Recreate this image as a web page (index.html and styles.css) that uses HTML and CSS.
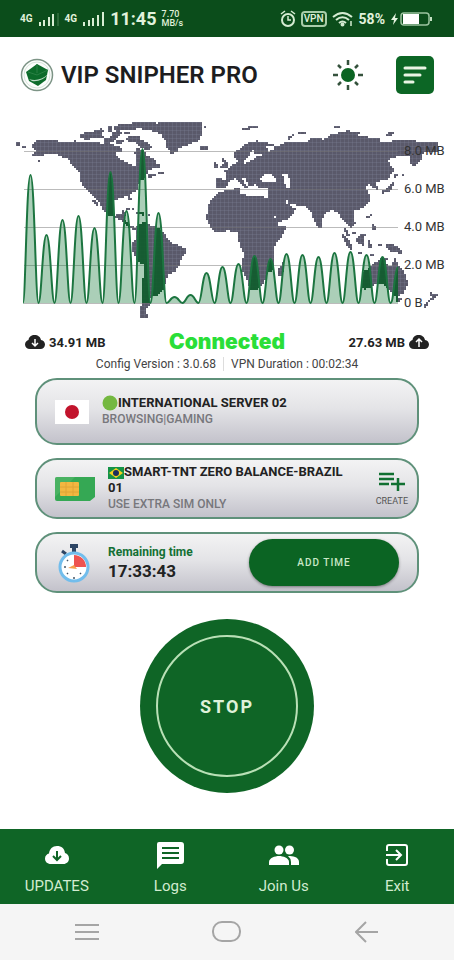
FILE: index.html
```html
<!DOCTYPE html>
<html lang="en">
<head>
  <meta charset="UTF-8" />
  <meta name="viewport" content="width=device-width, initial-scale=1" />
  <title>VIP SNIPHER PRO</title>
  <link rel="stylesheet" href="styles.css">
</head>
<body>
  <div class="statusbar">
    <div class="status-group">
      <span class="net">4G</span>
      <svg class="signal" width="22" height="16" viewBox="0 0 22 16">
        <path d="M2 15v-4M6 15V9M11 15V6M15 15V3" />
        <path class="dim" d="M20 15V2" />
      </svg>
      <span class="net">4G</span>
      <svg class="signal" width="23" height="16" viewBox="0 0 23 16">
        <path d="M2 15v-4M7 15V9M11 15V7M16 15V4M21 15V1" />
      </svg>
      <span class="clock">11:45</span>
      <span class="speed">7.70<br>MB/s</span>
    </div>
    <div class="status-group">
      <svg width="16" height="18" viewBox="0 0 16 18" fill="none" stroke="#d5ecd2" stroke-width="2">
        <circle cx="8" cy="10" r="6" />
        <path d="M8 6v4h3M1 4l4-3M15 4l-4-3" stroke-width="1.5" />
      </svg>
      <span class="vpn">VPN</span>
      <svg width="22" height="18" viewBox="0 0 22 18" fill="none" stroke="#d5ecd2" stroke-width="2">
        <path d="M1 7q9.500-8 19 0M4 10q6.500-5.500 13 0M7 13q3.500-3 7 0" />
        <circle cx="10.500" cy="14.500" r="1" />
        <path d="M19 11v5" stroke-width="1.500" />
      </svg>
      <span class="percent">58%</span>
      <svg width="44" height="16" viewBox="0 0 44 16">
        <path d="M6 2 1 9h3l-1 5 5-7H5z" fill="#e4f3df" />
        <rect x="11" y="2" width="28" height="12" rx="3" fill="none" stroke="#9cc4a0" stroke-width="1.500" />
        <rect x="13" y="3" width="16" height="10" fill="#fff" />
        <path d="M41 6v4" stroke="#c3e0c2" stroke-width="2" />
      </svg>
    </div>
  </div>

  <header class="header">
    <svg class="logo" width="34" height="34" viewBox="0 0 34 34">
      <circle cx="17" cy="17" r="15.500" fill="#fbfdfb" stroke="#7d9486" stroke-width="1.500" />
      <circle cx="17" cy="17" r="13" fill="none" stroke="#d8e4db" />
      <path d="M17 6 28 12l-2 10-8 6-9-5-3-9z" fill="#0c6b2a" />
      <path d="M17 6v9M8 14l9 3 11-5" stroke="#2a8044" fill="none" />
      <path d="M9 21c6 2 13 1 19-5-3 5-10 8-16 7z" fill="#b9d8c2" />
    </svg>
    <h1>VIP SNIPHER PRO</h1>
    <button class="icon-btn" type="button" aria-label="Theme">
      <svg width="30" height="30" viewBox="0 0 30 30">
        <circle cx="15" cy="15" r="7" fill="#0b6423" />
        <path d="M15 0v5M15 25v5M0 15h5M25 15h5M5 5l3 3M22 22l3 3M5 25l3-3M22 8l3-3" stroke="#35523d" stroke-width="2.500" />
      </svg>
    </button>
    <button class="menu-btn" type="button" aria-label="Menu">
      <svg width="38" height="38" viewBox="0 0 38 38" stroke="#e9f5e4" stroke-width="3" stroke-linecap="round">
        <path d="M9 12h20M9 19h15M9 26h8" />
      </svg>
    </button>
  </header>

  <main>
    <svg class="chart" viewBox="0 3 454 217" role="img" aria-label="Traffic">
      <defs>
        <pattern id="mesh" width="4" height="4" patternUnits="userSpaceOnUse">
          <path d="M0 .5h4M.5 0v4" stroke="#8586a0" stroke-opacity=".25" />
        </pattern>
        <clipPath id="landClip"><path id="clipCells" /></clipPath>
      </defs>
      <path id="land" class="land" />
      <path id="landMesh" fill="url(#mesh)" />
      <path class="grid" d="M24 41.500H398M24 79.500H398M24 117.500H398M24 155.500H398M24 193.500H398" />
      <path id="area" class="area" />
      <path id="areaLand" class="area-land" clip-path="url(#landClip)" />
      <path id="line" class="line" />
      <g class="axis">
        <text x="404" y="45">8.0 MB</text>
        <text x="404" y="83">6.0 MB</text>
        <text x="404" y="121">4.0 MB</text>
        <text x="404" y="159">2.0 MB</text>
        <text x="404" y="197">0 B</text>
      </g>
    </svg>

    <div class="stats">
      <div class="traffic">
        <svg width="20" height="16" viewBox="0 0 20 16">
          <path d="M5 15C2 15 0 13 0 10.500 0 8 2 6.500 3.500 6 4 2.500 6.500 1 9.500 1c3.500 0 6 2 6.500 5 2.500.5 4 2.200 4 4.500 0 2.700-2 4.500-4.500 4.500z" fill="#222" />
          <path d="M10 5v7M7 9l3 3 3-3" fill="none" stroke="#fff" stroke-width="1.500" />
        </svg>
        <span>34.91 MB</span>
      </div>
      <div class="state">Connected</div>
      <div class="traffic upload">
        <span>27.63 MB</span>
        <svg width="20" height="16" viewBox="0 0 20 16">
          <path d="M5 15C2 15 0 13 0 10.500 0 8 2 6.500 3.500 6 4 2.500 6.500 1 9.500 1c3.500 0 6 2 6.500 5 2.500.5 4 2.200 4 4.500 0 2.700-2 4.500-4.500 4.500z" fill="#222" />
          <path d="M10 13V6M7 8l3-3 3 3" fill="none" stroke="#fff" stroke-width="1.500" />
        </svg>
      </div>
    </div>
    <div class="meta">
      <span>Config Version : 3.0.68</span>
      <span class="duration">VPN Duration : 00:02:34</span>
    </div>

    <div class="cards">
      <section class="card card-server">
        <svg class="flag" width="34" height="24" viewBox="0 0 34 24">
          <rect width="34" height="24" fill="#fff" />
          <circle cx="17" cy="12" r="7" fill="#c2142c" />
        </svg>
        <div class="card-text">
          <div class="card-title"><svg width="16" height="16" viewBox="0 0 16 16"><circle cx="8" cy="8" r="7.500" fill="#74b840" /></svg>INTERNATIONAL SERVER 02</div>
          <div class="card-sub">BROWSING|GAMING</div>
        </div>
      </section>

      <section class="card card-sim">
        <svg width="40" height="26" viewBox="0 0 40 26">
          <path d="M2 1h38v20l-5 4H2q-2 0-2-2V3q0-2 2-2z" fill="#35a854" />
          <path d="M0 21 20 1H2Q0 1 0 3z" fill="#5dbc70" opacity=".5" />
          <rect x="5" y="6" width="19" height="14" rx="1" fill="#f3b741" />
          <path d="M5 11h6v5H5M24 11h-6v5h6M11 6v5h7V6M11 20v-4h7v4" fill="none" stroke="#e0a436" />
        </svg>
        <div class="card-text">
          <div class="card-title"><svg width="16" height="12" viewBox="0 0 16 12"><rect width="16" height="12" fill="#159447" /><path d="M8 1l7 5-7 5-7-5z" fill="#f2d21f" /><circle cx="8" cy="6" r="3" fill="#1b2f5c" /></svg>SMART-TNT ZERO BALANCE-BRAZIL 01</div>
          <div class="card-sub">USE EXTRA SIM ONLY</div>
        </div>
        <button class="create" type="button">
          <svg width="26" height="20" viewBox="0 0 26 20" fill="none" stroke="#117032" stroke-width="2.500">
            <path d="M0 3h15M0 8h15M0 13h10M12 13h14M19 7v13" />
          </svg>
          CREATE
        </button>
      </section>

      <section class="card card-time">
        <svg width="38" height="40" viewBox="-2 0 38 40">
          <path d="M13 3h8M17 3v6" stroke="#2d4564" stroke-width="4" />
          <path d="M5 8l4 3" stroke="#2d4564" stroke-width="3" />
          <circle cx="17" cy="24" r="14" fill="#fff" stroke="#72bdec" stroke-width="3" />
          <path d="M17 24V12a12 12 0 0 1 12 12z" fill="#ee5350" />
          <path d="M17 34v2M7 24h2M10 17l1 1M10 31l1-1M24 31l-1-1" stroke="#456" stroke-width="1.500" />
          <path d="M11 25l6-3 3 4z" fill="#f5a04c" />
        </svg>
        <div class="card-text">
          <div class="time-label">Remaining time</div>
          <div class="time-value">17:33:43</div>
        </div>
        <button class="add-time" type="button">ADD TIME</button>
      </section>
    </div>

    <button class="stop" type="button"><span>STOP</span></button>
  </main>

  <nav class="tabs">
    <a href="#updates">
      <svg width="26" height="28" viewBox="0 0 26 28">
        <path d="M7 23c-4 0-6-2.500-6-5.500 0-2.800 2-4.500 4-5C5.500 8 8.500 5 13 5c4.500 0 7.500 2.500 8 7 2.500.8 4 2.800 4 5.500 0 3.200-2.500 5.500-5.500 5.500z" fill="#fff" />
        <path d="M13 10v9M9 15l4 4 4-4" fill="none" stroke="#0f6526" stroke-width="2" />
      </svg>
      UPDATES
    </a>
    <a href="#logs">
      <svg width="28" height="28" viewBox="0 0 28 28">
        <path d="M3 1h22q3 0 3 3v16q0 3-3 3H6l-5 5V3q0-2 2-2z" fill="#fff" />
        <path d="M6 7h17M6 12h17M6 17h17" stroke="#0f6526" stroke-width="2" />
      </svg>
      Logs
    </a>
    <a href="#join">
      <svg width="30" height="28" viewBox="0 0 30 28" fill="#fff">
        <circle cx="10" cy="9" r="4.500" />
        <path d="M0 24v-3c0-4 6-6 10-6s10 2 10 6v3z" />
        <circle cx="20.500" cy="9" r="4.500" />
        <path d="M21 15c5 .2 9 2 9 6v3h-8v-3q0-3.500-3-6z" />
      </svg>
      Join Us
    </a>
    <a href="#exit">
      <svg width="24" height="28" viewBox="0 0 24 28" fill="none" stroke="#fff" stroke-width="2">
        <path d="M2 10V6q0-2 2-2h16q2 0 2 2v16q0 2-2 2H4q-2 0-2-2v-4M1 14h14M11 9l5 5-5 5" />
      </svg>
      Exit
    </a>
  </nav>

  <div class="sysnav">
    <button type="button" aria-label="Recent apps">
      <svg width="26" height="20" viewBox="0 0 26 20"><path d="M1 3h24M1 10h24M1 17h24" /></svg>
    </button>
    <button type="button" aria-label="Home">
      <svg width="30" height="22" viewBox="0 0 30 22"><rect x="1" y="1" width="27" height="19" rx="9" /></svg>
    </button>
    <button type="button" aria-label="Back">
      <svg width="24" height="22" viewBox="0 0 24 22"><path d="M23 11H2M11 1 1 11l10 10" /></svg>
    </button>
  </div>

  <script src="chart.js"></script>
</body>
</html>
```

FILE: chart.js
```js
// outlines are stored at 3x the chart units, as x,y pairs
const SCALE = 3;
const CELL = 2;

const west = [
  // north america
  '108,90 175,88 178,96 218,96 222,88 232,98 330,100 345,108 362,106 364,124 348,128 352,144 380,156 402,168 404,178 408,150 404,128 412,114 430,122 445,140 462,145 470,160 487,170 462,174 445,180 440,195 432,205 420,215 412,235 408,245 392,250 394,272 388,272 382,258 362,266 345,268 342,290 340,320 325,318 310,300 295,275 275,255 250,232 240,210 243,190 225,175 212,158 205,146 185,140 165,132 140,132 120,140 95,136 108,122 93,112',
  '325,306 345,316 378,306 380,318 366,324 385,336 392,350 412,352 404,364 385,350 368,334 345,324',
  // south america
  '406,350 430,335 455,348 475,352 490,368 505,386 520,400 556,414 556,428 545,440 540,465 525,485 505,495 498,515 490,540 475,557 460,558 450,568 450,585 438,600 446,626 422,624 418,606 425,580 428,540 430,465 412,450 398,425 395,400 408,385',
  '275,268 284,268 300,290 292,292',
  // greenland and arctic islands
  '455,52 478,38 606,38 608,60 600,92 575,98 560,108 540,112 528,128 512,130 500,110 498,92 480,70 455,64',
  '365,42 430,36 478,40 465,58 440,62 420,54 395,60 340,62 340,48',
  '325,48 334,48 334,68 325,68', '280,60 308,56 310,68 298,72 285,68',
  '242,74 262,66 300,70 310,82 280,82 262,92 242,84', '335,70 350,62 368,64 352,84 338,98 328,88',
  '375,66 392,66 392,74 375,74', '375,82 415,78 425,90 445,98 458,112 440,122 418,110 402,96 380,92',
  '272,96 302,96 302,105 272,105', '350,90 372,92 360,106 348,100', '310,84 328,86 332,104 312,104',
  '600,108 627,108 622,118 603,122', '50,96 58,98 60,106 78,106 78,112 50,110', '112,150 120,150 120,158 112,158',
  '614,46 620,46 620,52 614,52', '445,190 462,194 490,184 492,190 458,198 447,206', '445,312 453,312 453,320 445,320',
  '380,296 388,296 388,302 380,302', '396,296 404,296 404,302 396,302', '368,298 374,298 374,306 368,306',
  '410,304 432,308 430,316 410,312',
  // british isles
  '642,158 656,160 655,172 642,172', '664,142 672,148 686,165 686,175 658,174 670,162',
  // africa
  '655,248 690,238 717,236 722,252 757,258 802,262 812,290 822,315 834,345 860,346 847,378 822,410 824,450 822,480 800,490 797,510 780,535 752,542 744,520 727,480 730,430 717,395 714,368 682,362 670,368 645,365 632,350 620,330 622,290 640,262',
  '837,475 854,450 852,480 844,498 835,495'
];

// these start at x = 224 in chart units
const east = [
  // europe and asia
  '-22,206 8,208 8,192 0,185 12,175 25,166 40,158 40,148 28,140 28,126 50,118 65,100 100,92 140,100 160,108 185,96 250,98 262,82 300,88 320,74 370,62 408,68 400,80 465,82 470,96 500,96 510,88 565,90 600,98 640,98 642,128 600,128 590,150 570,170 558,160 562,142 535,136 520,140 492,148 500,165 512,178 500,196 490,208 462,214 455,222 464,242 445,230 430,216 428,235 436,252 436,272 425,290 405,298 388,302 388,320 394,340 382,352 360,335 345,312 325,300 305,310 295,325 292,356 280,350 265,318 258,300 245,290 215,285 195,280 180,260 190,282 214,295 210,312 185,330 160,336 150,310 135,280 132,262 135,235 100,232 95,222 85,232 75,225 62,205 52,206 72,230 60,235 46,214 35,205 20,212 5,232 -22,232',
  '56,56 75,50 104,46 104,54 84,56 60,62', '195,80 210,72 205,86 192,88', '225,64 245,66 245,72 225,72',
  '330,46 350,48 350,54 330,54', '488,74 500,64 512,66 500,76 490,82',
  '470,240 490,236 500,220 508,218 506,236 490,248 474,250', '508,190 520,195 518,206 508,204', '535,192 542,192 542,200 535,200',
  '428,320 442,312 440,324 430,328', '442,340 450,342 458,358 445,358',
  '350,370 358,372 378,395 386,414 380,418 368,404', '360,354 372,362 378,380 366,374',
  '400,424 416,426 416,432 400,432', '440,432 452,432 452,438 440,438',
  '392,388 412,372 424,370 420,406 400,400', '430,390 440,388 442,412 430,412', '385,366 394,366 394,374 385,374',
  '462,402 476,400 474,408 462,408', '484,398 510,404 530,414 534,434 515,426 500,424 488,410',
  // australia and new zealand
  '412,485 430,478 445,462 460,456 470,442 490,444 488,462 505,470 510,438 520,460 535,478 548,500 550,525 540,550 518,562 500,542 480,525 460,520 440,532 418,540 412,515',
  '518,562 534,564 530,576 518,574', '618,545 628,552 642,554 636,564 624,570 612,578 610,590 598,592 602,580 622,566'
];

const seas = [
  '110,205 118,195 135,190 152,200 156,215 112,217', '176,194 192,190 196,210 196,236 185,236 182,215',
  '62,152 76,134 92,118 88,132 118,134 95,142 78,154 62,160', '128,110 155,104 148,122 134,124'
];

function parse(list, dx) {
  return list.map(s => s.split(' ').map(p => {
    const [x, y] = p.split(',').map(Number);
    return [(x + dx) / SCALE, y / SCALE];
  }));
}

function inside(x, y, poly) {
  let hit = false;
  for (let i = 0, j = poly.length - 1; i < poly.length; j = i++) {
    const [xi, yi] = poly[i];
    const [xj, yj] = poly[j];
    if ((yi > y) !== (yj > y) && x < (xj - xi) * (y - yi) / (yj - yi) + xi) hit = !hit;
  }
  return hit;
}

const lands = parse(west, 0).concat(parse(east, 672));
const water = parse(seas, 672);
let cells = '';
for (let y = 10; y < 212; y += CELL) {
  for (let x = 14; x < 442; x += CELL) {
    const cx = x + 1;
    const cy = y + 1;
    if (lands.some(p => inside(cx, cy, p)) && !water.some(p => inside(cx, cy, p))) {
      cells += `M${x} ${y}h${CELL}v${CELL}h-${CELL}z`;
    }
  }
}
['land', 'landMesh', 'clipCells'].forEach(id => document.getElementById(id).setAttribute('d', cells));

// traffic peaks, one every 16 units (y of each top)
const BASE = 193;
const peaks = [65, 125, 110, 106, 118, 62, 101, 39, 103, 187, 185, 163, 157, 154, 146, 149, 144, 145, 147, 143, 142, 145, 147];

let d = `M23 ${BASE}`;
peaks.forEach((top, i) => {
  const x = 30.5 + i * 16;
  d += `C${x - 5} ${BASE} ${x - 4} ${top} ${x} ${top}S${x + 5} ${BASE} ${x + 8} ${BASE}`;
});
d += `C394 ${BASE} 394 160 398 157`;
document.getElementById('line').setAttribute('d', d);
document.getElementById('area').setAttribute('d', d + `V${BASE}z`);
document.getElementById('areaLand').setAttribute('d', d + `V${BASE}z`);
```

FILE: styles.css
```css
* { box-sizing: border-box; }

body {
  margin: 0;
  min-height: 100vh;
  display: flex;
  flex-direction: column;
  background: #fff;
  color: #222;
  font-family: Roboto, "Liberation Sans", sans-serif;
}
button {
  font-family: inherit;
  border: 0;
  padding: 0;
  background: none;
  cursor: pointer;
}
svg { display: block; flex: none; }
main { flex: 1; }

/* status bar */
.statusbar {
  height: 37px;
  padding: 0 20px;
  display: flex;
  align-items: center;
  justify-content: space-between;
  background: #0b4d1b;
  color: #e1f2dc;
}
.status-group { display: flex; align-items: center; gap: 5px; }
.net { font-size: 10px; font-weight: 700; }
.signal { stroke: #d9eed4; stroke-width: 2; }
.signal .dim { stroke: #2a6837; }
.clock { font-size: 18px; font-weight: 700; }
.speed { font-size: 9px; line-height: 9px; font-weight: 500; }
.vpn {
  font-size: 10px;
  line-height: 12px;
  font-weight: 500;
  padding: 0 1px;
  border: 2px solid #a9cdaa;
  border-radius: 4px;
}
.percent { font-size: 14px; font-weight: 700; }

/* header */
.header {
  height: 76px;
  padding: 0 20px;
  display: flex;
  align-items: center;
}
.header h1 {
  flex: 1;
  margin: 0 0 0 7px;
  font-size: 24px;
  font-weight: 600;
  color: #1d1d1f;
}
.menu-btn {
  margin-left: 33px;
  border-radius: 5px;
  background: #0c6625;
}

/* traffic chart */
.chart { width: 100%; height: auto; }
.land { fill: #5a596a; shape-rendering: crispEdges; }
.grid { fill: none; stroke: #777; stroke-opacity: .5; }
.area { fill: #17793a; fill-opacity: .36; }
.area-land { fill: #0f5a2b; fill-opacity: .85; }
.line { fill: none; stroke: #1c7540; stroke-width: 2; }
.axis { font-size: 13px; fill: #333; }

.stats {
  height: 24px;
  padding: 0 25px;
  display: flex;
  align-items: center;
}
.traffic {
  flex: 1;
  display: flex;
  align-items: center;
  gap: 4px;
  font-size: 13px;
  font-weight: 700;
}
.upload { justify-content: flex-end; }
.state {
  font-family: Inter, Roboto, sans-serif;
  font-size: 21px;
  font-weight: 900;
  line-height: 24px;
  color: #2ade38;
}
.meta {
  height: 20px;
  display: flex;
  align-items: center;
  justify-content: center;
  font-size: 12px;
  color: #444;
}
.duration {
  margin-left: 7px;
  padding-left: 7px;
  border-left: 1px solid #ddd;
}

/* cards */
.cards {
  margin: 4px 35px 0;
  display: flex;
  flex-direction: column;
  gap: 13px;
}
.card {
  display: flex;
  align-items: center;
  min-height: 61px;
  padding: 0 18px;
  border: 2px solid #5f917a;
  border-radius: 22px;
  background: linear-gradient(#f3f3f4, #e4e4e7 45%, #c3c2cb);
}
.card-server { min-height: 67px; }
.card-sim { padding-right: 9px; }
.card-text { flex: 1; margin-left: 13px; }
.card-sim .card-text { margin-right: 24px; }
.card-title { font-size: 13px; line-height: 16px; font-weight: 700; }
.card-title svg { display: inline-block; vertical-align: middle; }
.card-sub { font-size: 12px; line-height: 17px; font-weight: 500; color: #77777c; }
.create {
  display: flex;
  flex-direction: column;
  align-items: center;
  gap: 5px;
  font-size: 9px;
  color: #555;
}
.card-time .card-text { margin-left: 15px; }
.time-label { font-size: 12px; line-height: 18px; font-weight: 700; color: #137034; }
.time-value { font-size: 17px; line-height: 21px; font-weight: 700; }
.add-time {
  width: 150px;
  height: 47px;
  border-radius: 24px;
  background: #0b6423;
  box-shadow: 0 1px 3px rgba(0, 0, 0, .4);
  color: #c9e7c6;
  font-size: 10px;
  font-weight: 500;
  letter-spacing: 1px;
}

/* connect button */
.stop {
  display: block;
  width: 174px;
  height: 174px;
  margin: 26px auto 20px;
  padding: 16px;
  border-radius: 50%;
  background: #0f6526;
}
.stop span {
  display: flex;
  align-items: center;
  justify-content: center;
  height: 100%;
  border: 2px solid #b9e0b6;
  border-radius: 50%;
  color: #dff2da;
  font-size: 18px;
  font-weight: 700;
  letter-spacing: 2px;
}

/* bottom tabs */
.tabs {
  display: flex;
  height: 75px;
  background: #0f6526;
}
.tabs a {
  flex: 1;
  display: flex;
  flex-direction: column;
  align-items: center;
  gap: 8px;
  padding-top: 12px;
  color: #d2ecd0;
  font-size: 15px;
  line-height: 18px;
  text-decoration: none;
}

.sysnav {
  display: flex;
  height: 56px;
  padding: 0 17px;
  background: #f5f5f5;
}
.sysnav button {
  flex: 1;
  display: flex;
  align-items: center;
  justify-content: center;
}
.sysnav svg { fill: none; stroke: #a5a5a5; stroke-width: 2; }
```
